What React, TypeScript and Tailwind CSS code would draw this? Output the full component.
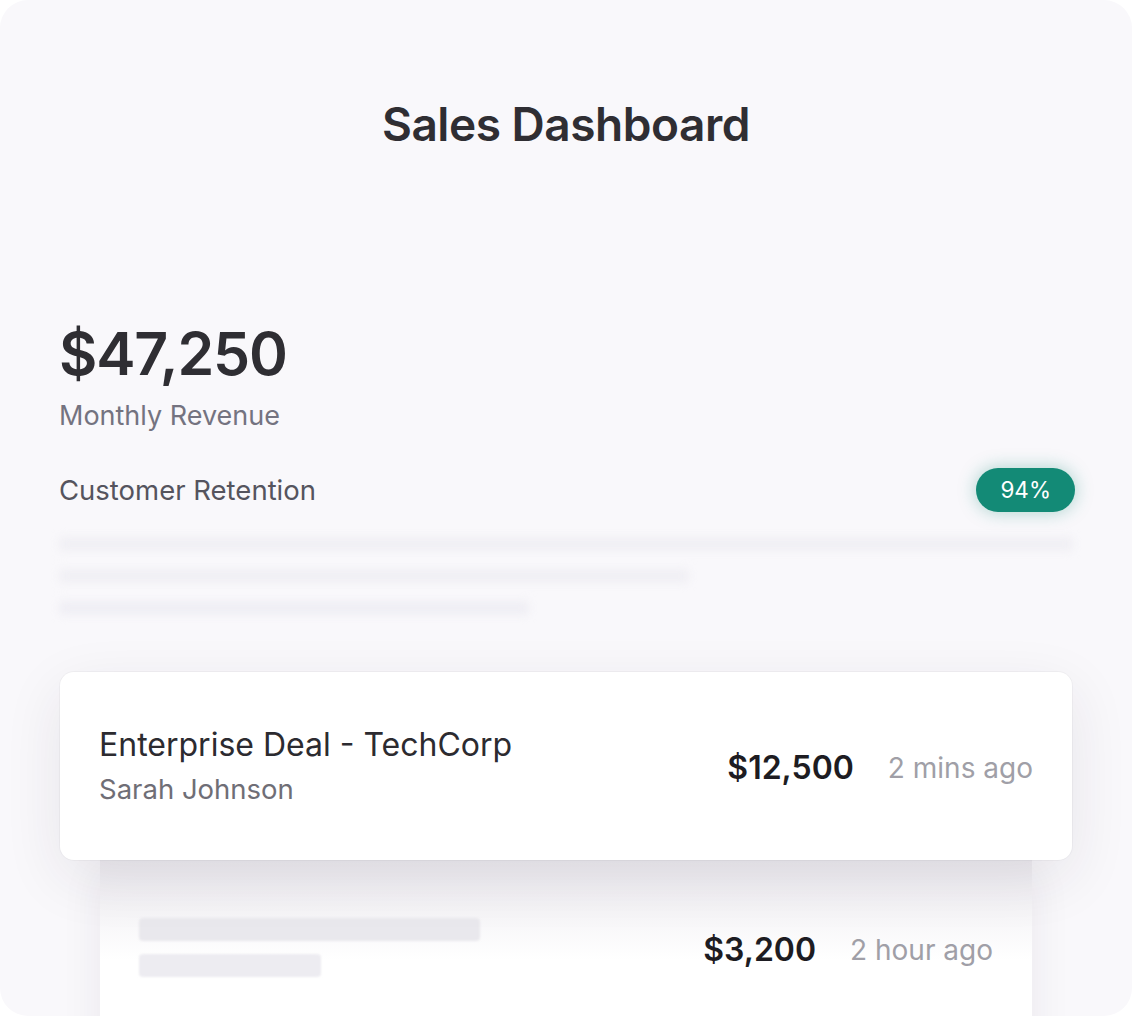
import React from 'react';

const font = { fontFamily: 'Inter, "Liberation Sans", sans-serif' };

export default function App() {
  return (
    <div className="w-[1132px] h-[1016px] bg-white overflow-hidden" style={font}>
      <div className="h-full rounded-[28px] bg-[#f9f8fb] overflow-hidden px-[59px] pt-[96px]">
        {/* Header */}
        <h1 className="text-center text-[46px] leading-[56px] font-semibold text-[#2f2e33] tracking-[-0.01em]">
          Sales Dashboard
        </h1>

        {/* Revenue */}
        <div className="mt-[169px]">
          <div className="text-[59px] leading-[66px] font-semibold text-[#2f2e33] tracking-[-0.02em]">$47,250</div>
          <div className="mt-[12px] text-[27px] leading-[34px] text-[#747380]">Monthly Revenue</div>
        </div>

        {/* Retention */}
        <div className="mt-[35px] flex items-center justify-between">
          <span className="text-[27.5px] leading-[34px] text-[#55545e]">Customer Retention</span>
          <span className="mr-[-2px] rounded-full bg-[#138a76] px-[24px] py-[6px] text-[22.5px] leading-[32px] text-white shadow-[0_0_18px_rgba(19,138,118,0.35)]">
            94%
          </span>
        </div>

        {/* Blurred skeleton lines */}
        <div className="mt-[25px] flex flex-col gap-[18px] blur-[4px]">
          <div className="h-[14px] w-full rounded bg-[#f0eff4]" />
          <div className="h-[14px] w-[630px] rounded bg-[#f0eff4]" />
          <div className="h-[14px] w-[470px] rounded bg-[#efeef4]" />
        </div>

        {/* Activity cards */}
        <div className="mt-[57px] mx-[1px]">
          <div className="relative z-10 flex items-center justify-between rounded-[14px] bg-white px-[39px] h-[188px] shadow-[0_18px_60px_rgba(40,35,60,0.09),0_0_0_1px_rgba(0,0,0,0.03)]">
            <div>
              <div className="text-[32px] leading-[38px] text-[#2c2b30]">Enterprise Deal - TechCorp</div>
              <div className="mt-[8px] text-[27.5px] leading-[34px] text-[#6f6e76]">Sarah Johnson</div>
            </div>
            <div className="flex items-center gap-[34px] pt-[4px]">
              <span className="text-[32px] leading-[38px] font-semibold text-[#1d1c22]">$12,500</span>
              <span className="text-[28px] leading-[36px] text-[#a09fa7]">2 mins ago</span>
            </div>
          </div>

          <div className="mx-[40px] flex items-start justify-between h-[200px] bg-gradient-to-b from-[#eceaef] via-white to-white px-[39px] pt-[58px] shadow-[0_10px_40px_rgba(40,35,60,0.07)]">
            <div className="flex flex-col gap-[13px] blur-[1px]">
              <div className="h-[23px] w-[341px] rounded-[4px] bg-[#e9e8ed]" />
              <div className="h-[23px] w-[182px] rounded-[4px] bg-[#edecf1]" />
            </div>
            <div className="flex items-center gap-[34px] pt-[13px]">
              <span className="text-[32px] leading-[38px] font-semibold text-[#1d1c22]">$3,200</span>
              <span className="text-[28px] leading-[36px] text-[#a09fa7]">2 hour ago</span>
            </div>
          </div>
        </div>
      </div>
    </div>
  );
}
